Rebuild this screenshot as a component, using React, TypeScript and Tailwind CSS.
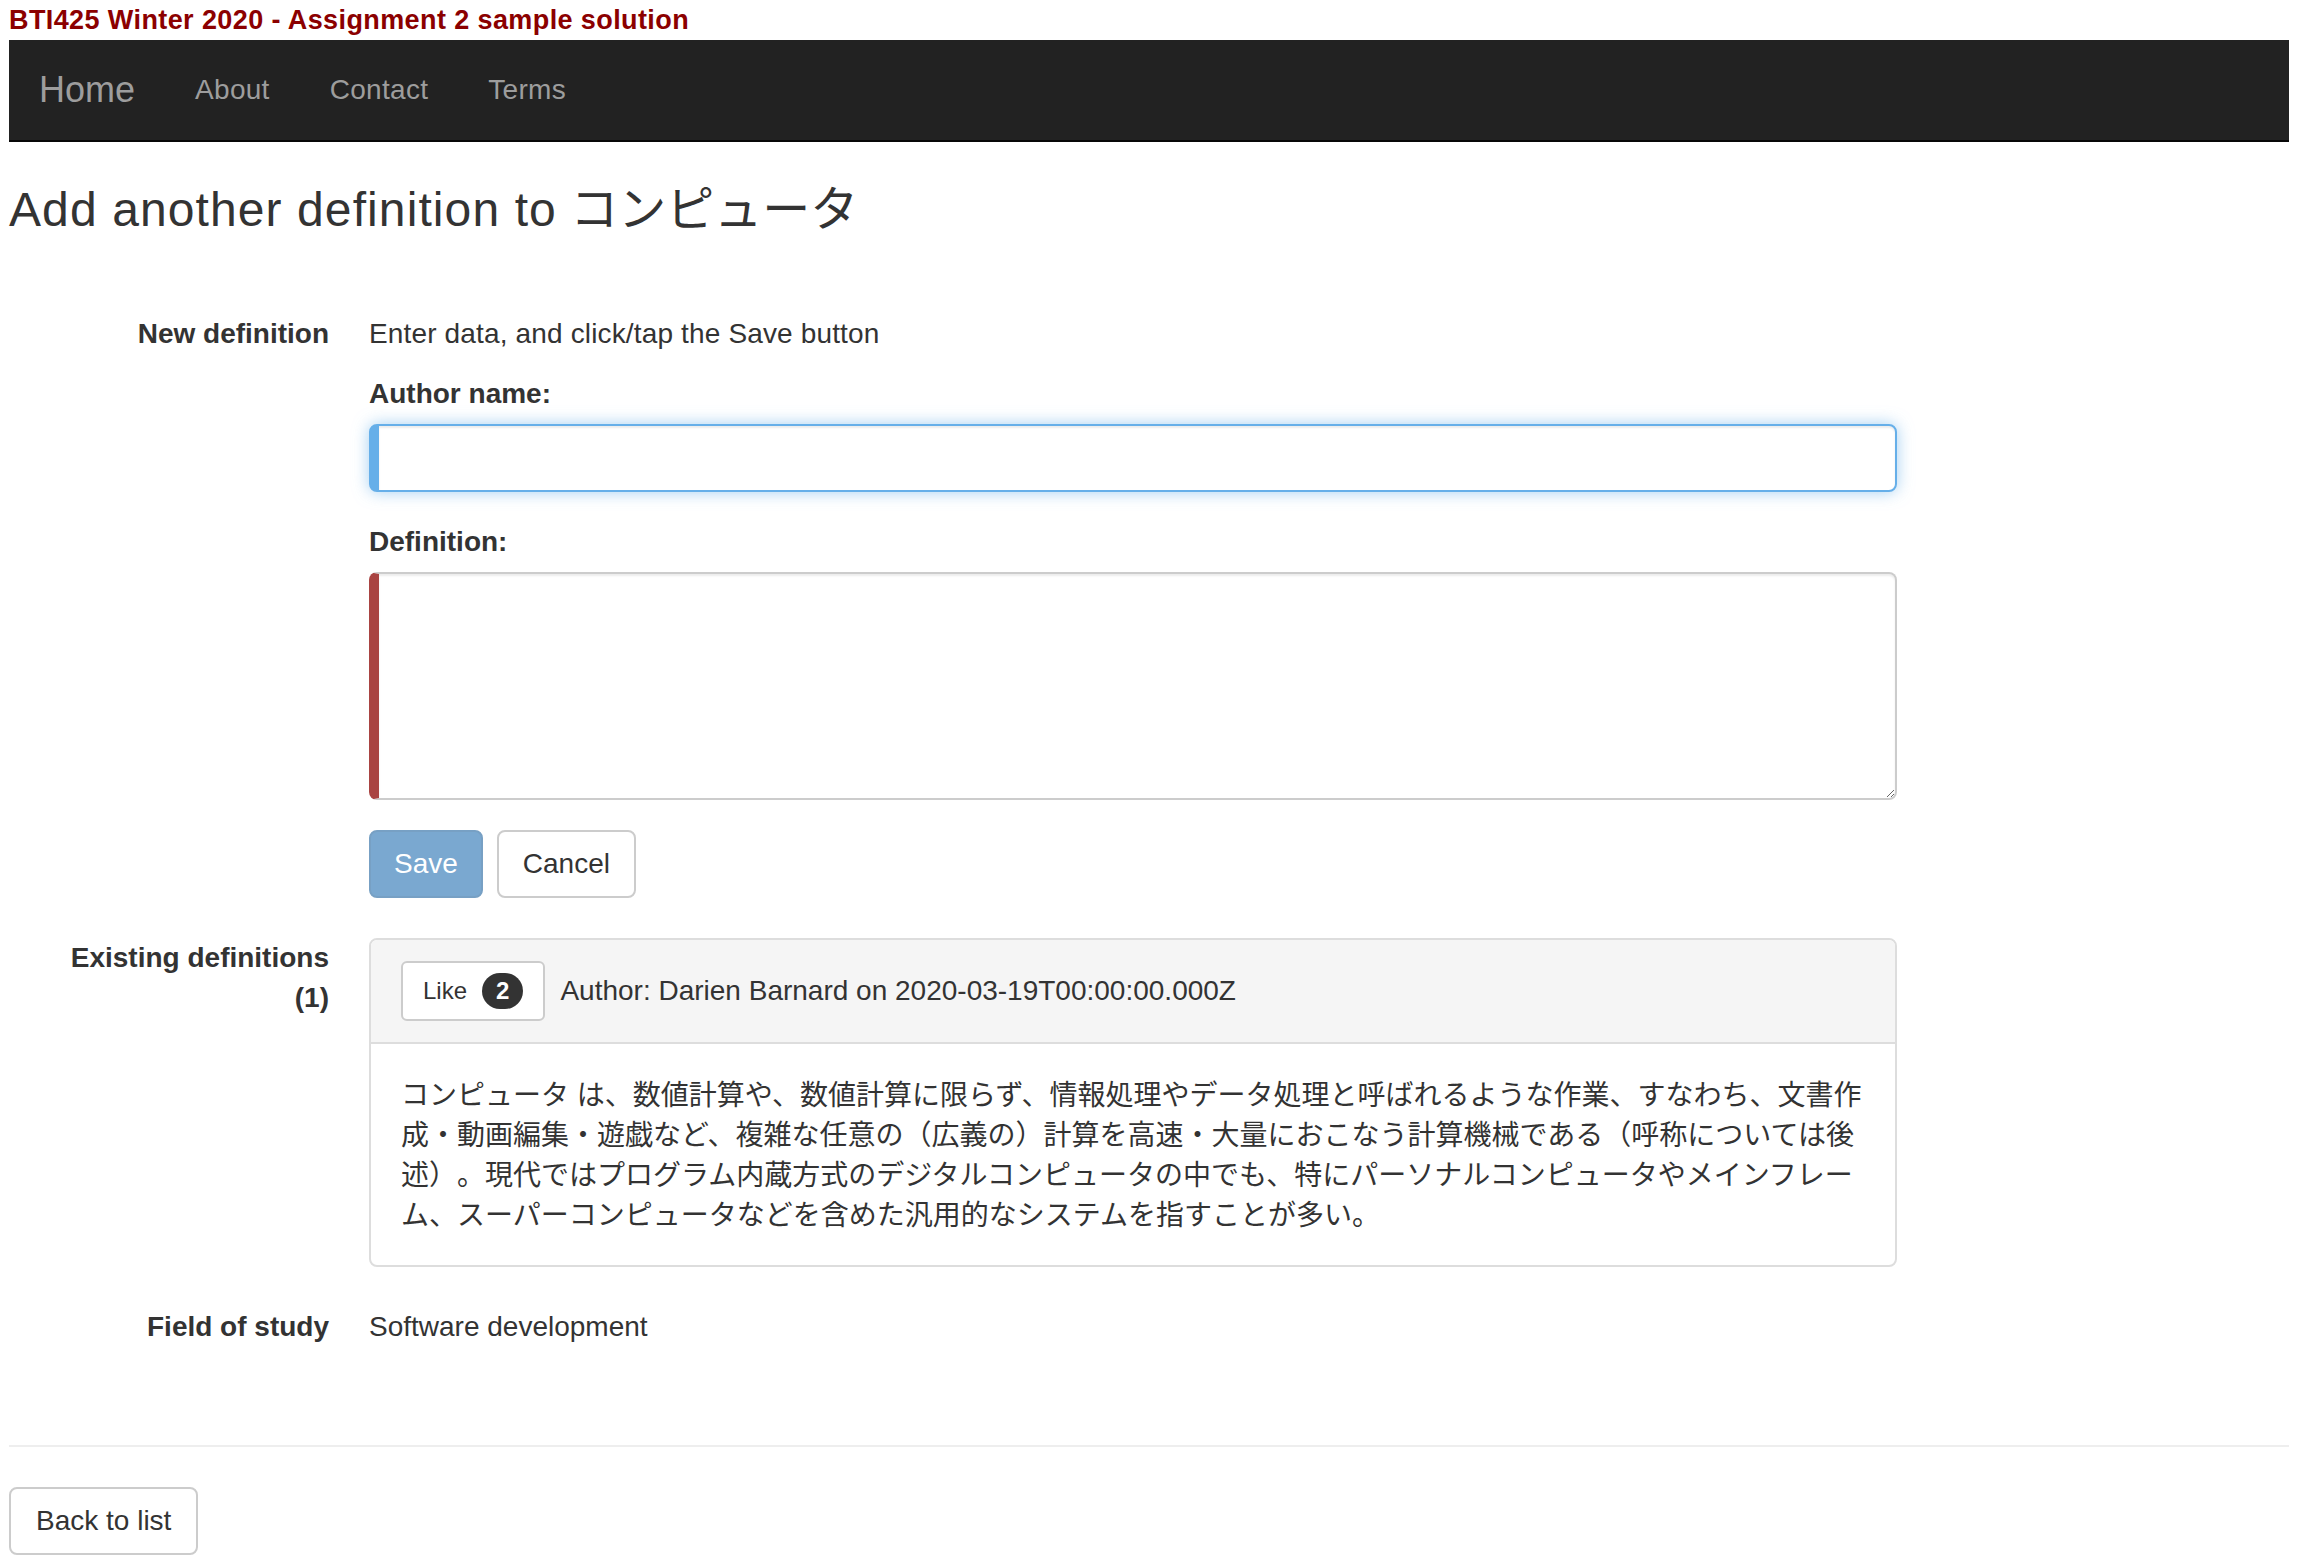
import React from "react";

const jpText =
  "コンピュータ は、数値計算や、数値計算に限らず、情報処理やデータ処理と呼ばれるような作業、すなわち、文書作成・動画編集・遊戯など、複雑な任意の（広義の）計算を高速・大量におこなう計算機械である（呼称については後述）。現代ではプログラム内蔵方式のデジタルコンピュータの中でも、特にパーソナルコンピュータやメインフレーム、スーパーコンピュータなどを含めた汎用的なシステムを指すことが多い。";

export default function App() {
  return (
    <div className="min-h-screen bg-white pl-[9px] pr-[25px] text-[28px] leading-[40px] text-[#333] font-['Liberation_Sans','Noto_Sans_CJK_JP',sans-serif]">
      <div className="h-[40px] text-[27px] font-bold leading-[40px] tracking-[0.4px] text-[#8b0000]">
        BTI425 Winter 2020 - Assignment 2 sample solution
      </div>

      <nav className="flex h-[102px] items-start border-b-2 border-[#080808] bg-[#222]">
        <a className="px-[30px] pt-[30px] text-[36px] leading-[40px] text-[#9d9d9d]">Home</a>
        <a className="px-[30px] pt-[30px] text-[28px] leading-[40px] tracking-[0.3px] text-[#9d9d9d]">About</a>
        <a className="px-[30px] pt-[30px] text-[28px] leading-[40px] tracking-[0.3px] text-[#9d9d9d]">Contact</a>
        <a className="px-[30px] pt-[30px] text-[28px] leading-[40px] tracking-[0.3px] text-[#9d9d9d]">Terms</a>
      </nav>

      <h3 className="mt-[41px] text-[48px] font-normal leading-[53px] text-[#333]">
        <span className="tracking-[1.1px]">Add another definition to</span> コンピュータ
      </h3>

      <dl className="mt-[78px] grid grid-cols-[320px_1528px] gap-x-[40px]">
        <dt className="text-right font-bold">New definition</dt>
        <dd>
          <p className="mb-[20px] tracking-[0.15px]">Enter data, and click/tap the Save button</p>
          <label className="mb-[10px] block font-bold">Author name:</label>
          <input
            type="text"
            className="block h-[68px] w-full rounded-[8px] border-2 border-l-[10px] border-[#66afe9] bg-white px-[24px] text-[28px] outline-none shadow-[inset_0_2px_2px_rgba(0,0,0,0.075),0_0_16px_rgba(102,175,233,0.6)]"
          />
          <label className="mb-[10px] mt-[30px] block font-bold">Definition:</label>
          <textarea
            className="block h-[228px] w-full resize-y rounded-[8px] border-2 border-l-[10px] border-[#ccc] border-l-[#a94442] bg-white px-[24px] py-[12px] text-[28px] outline-none shadow-[inset_0_2px_2px_rgba(0,0,0,0.075)]"
          />
          <div className="mt-[30px] flex gap-[14px]">
            <button className="h-[68px] rounded-[8px] border-2 border-[#77a0c4] bg-[#7aa8d0] px-[23px] text-[28px] leading-[40px] text-white">
              Save
            </button>
            <button className="h-[68px] rounded-[8px] border-2 border-[#ccc] bg-white px-[24px] text-[28px] leading-[40px] text-[#333]">
              Cancel
            </button>
          </div>
        </dd>

        <dt className="mt-[40px] text-right font-bold">
          Existing definitions
          <br />
          (1)
        </dt>
        <dd className="mt-[40px]">
          <div className="rounded-[8px] border-2 border-[#ddd] bg-white">
            <div className="flex items-center rounded-t-[6px] border-b-2 border-[#ddd] bg-[#f5f5f5] px-[30px] py-[21px]">
              <button className="flex h-[60px] items-center rounded-[6px] border-2 border-[#ccc] bg-white px-[20px] text-[24px] leading-[36px] text-[#333]">
                Like
                <span className="ml-[15px] inline-block rounded-[20px] bg-[#333] px-[14px] py-[6px] text-[24px] font-bold leading-[24px] text-white">
                  2
                </span>
              </button>
              <span className="ml-[15px]">Author: Darien Barnard on 2020-03-19T00:00:00.000Z</span>
            </div>
            <div className="px-[30px] pb-[29px] pt-[32px]">
              <p className="[text-spacing-trim:space-all]">{jpText}</p>
            </div>
          </div>
        </dd>

        <dt className="mt-[40px] text-right font-bold">Field of study</dt>
        <dd className="mt-[40px]">Software development</dd>
      </dl>

      <hr className="mt-[98px] border-0 border-t-2 border-[#eee]" />

      <button className="mt-[40px] h-[68px] rounded-[8px] border-2 border-[#ccc] bg-white px-[25px] text-[28px] leading-[40px] text-[#333]">
        Back to list
      </button>
    </div>
  );
}
